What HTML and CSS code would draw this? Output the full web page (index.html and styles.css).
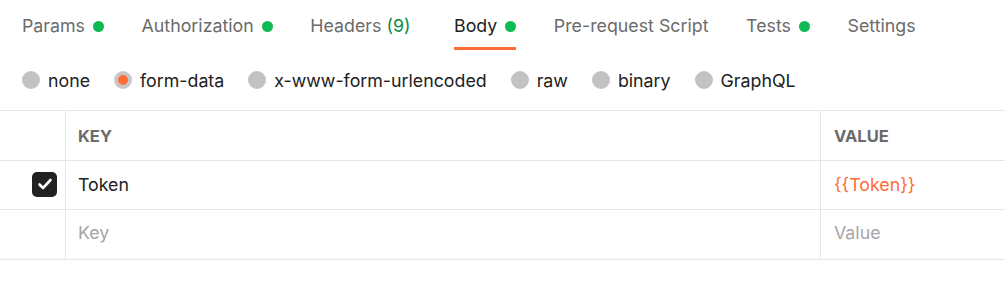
FILE: index.html
```html
<!DOCTYPE html>
<html>
<head>
<meta charset="utf-8">
<link rel="stylesheet" href="styles.css">
</head>
<body>
<div class="tabs">
  <div class="tab">Params <span class="dot"></span></div>
  <div class="tab">Authorization <span class="dot"></span></div>
  <div class="tab">Headers <span class="count">(9)</span></div>
  <div class="tab active">Body <span class="dot"></span></div>
  <div class="tab">Pre-request Script</div>
  <div class="tab">Tests <span class="dot"></span></div>
  <div class="tab">Settings</div>
</div>
<div class="radios">
  <label class="radio"><span class="circle"></span>none</label>
  <label class="radio"><span class="circle checked"></span>form-data</label>
  <label class="radio"><span class="circle"></span>x-www-form-urlencoded</label>
  <label class="radio"><span class="circle"></span>raw</label>
  <label class="radio"><span class="circle"></span>binary</label>
  <label class="radio"><span class="circle"></span>GraphQL</label>
</div>
<div class="table">
  <div class="row head">
    <div class="cell c1"></div>
    <div class="cell c2">KEY</div>
    <div class="cell c3">VALUE</div>
  </div>
  <div class="row data">
    <div class="cell c1"><span class="check"><svg width="16" height="16" viewBox="0 0 16 16"><polyline points="2.5,8.5 6,12 13.5,4" fill="none" stroke="#fff" stroke-width="2.6" stroke-linecap="round" stroke-linejoin="round"/></svg></span></div>
    <div class="cell c2">Token</div>
    <div class="cell c3 var">{{Token}}</div>
  </div>
  <div class="row data last">
    <div class="cell c1"></div>
    <div class="cell c2 ph">Key</div>
    <div class="cell c3 ph">Value</div>
  </div>
</div>
</body>
</html>
```
FILE: styles.css
```css
body {
  margin: 0;
  background: #fff;
  font-family: Inter, "Noto Sans", sans-serif;
  font-size: 17.8px;
  color: #212121;
}
.tabs {
  display: flex;
  padding-left: 22px;
  gap: 37.6px;
  height: 50px;
}
.tab {
  display: flex;
  align-items: center;
  gap: 8px;
  color: #6b6b6b;
  line-height: 21px;
  padding-top: 15px;
  padding-bottom: 11px;
  border-bottom: 3px solid transparent;
  height: 21px;
  white-space: nowrap;
}
.tab.active {
  color: #212121;
  border-bottom-color: #ff6c37;
}
.dot {
  width: 11px;
  height: 11px;
  border-radius: 50%;
  background: #0cbb52;
  margin-top: 1px;
}
.count {
  color: #0a8a3d;
  margin-left: -3px;
  margin-right: 6px;
}
.radios {
  display: flex;
  align-items: center;
  height: 60px;
  padding-left: 22px;
  gap: 24px;
}
.radio {
  display: flex;
  align-items: center;
  gap: 8px;
  color: #212121;
  line-height: 21px;
}
.circle {
  width: 18px;
  height: 18px;
  border-radius: 50%;
  background: #c2c2c2;
  box-sizing: border-box;
}
.circle.checked {
  background: #ff6c37;
  border: 4px solid #c7c7c7;
}
.table {
  border-top: 1px solid #e6e6e6;
}
.row {
  display: flex;
  border-bottom: 1px solid #e6e6e6;
}
.row.head {
  height: 49px;
}
.row.data {
  height: 48px;
}
.row.last {
  height: 49px;
}
.cell {
  display: flex;
  align-items: center;
  padding-left: 12px;
  box-sizing: border-box;
}
.c1 {
  width: 66px;
  border-right: 1px solid #e6e6e6;
  justify-content: flex-end;
  padding-left: 0;
  padding-right: 8px;
}
.c2 {
  width: 755px;
  border-right: 1px solid #e6e6e6;
}
.c3 {
  flex: 1;
  padding-left: 13px;
}
.head .cell {
  font-weight: 700;
  font-size: 16.5px;
  color: #6b6b6b;
}
.data .cell {
  padding-bottom: 2px;
}
.last .cell {
  padding-bottom: 5px;
}
.var {
  color: #ff6c37;
}
.ph {
  color: #a6a6a6;
}
.check {
  width: 25px;
  height: 25px;
  border-radius: 5px;
  background: #212121;
  display: flex;
  align-items: center;
  justify-content: center;
}
```
